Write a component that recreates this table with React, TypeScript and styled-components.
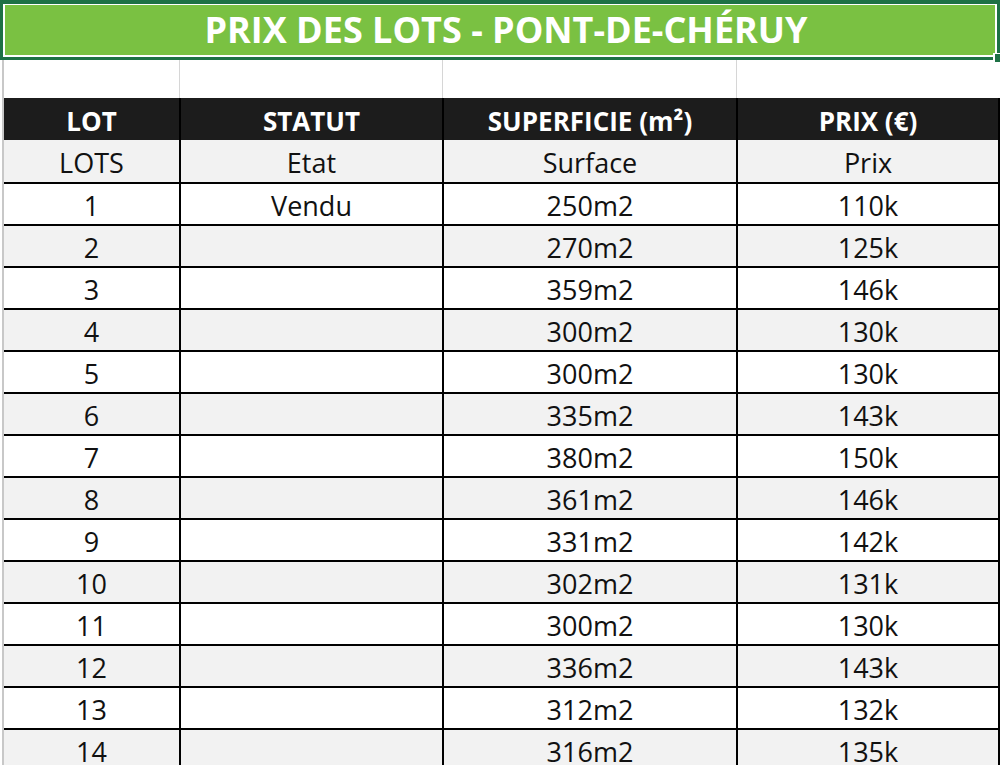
import styled, { createGlobalStyle } from 'styled-components';

interface Lot {
    id: number;
    status?: string;
    surface: number;
    price: number;
}

const lots: Lot[] = [
    { id: 1, status: 'Vendu', surface: 250, price: 110 },
    { id: 2, surface: 270, price: 125 },
    { id: 3, surface: 359, price: 146 },
    { id: 4, surface: 300, price: 130 },
    { id: 5, surface: 300, price: 130 },
    { id: 6, surface: 335, price: 143 },
    { id: 7, surface: 380, price: 150 },
    { id: 8, surface: 361, price: 146 },
    { id: 9, surface: 331, price: 142 },
    { id: 10, surface: 302, price: 131 },
    { id: 11, surface: 300, price: 130 },
    { id: 12, surface: 336, price: 143 },
    { id: 13, surface: 312, price: 132 },
    { id: 14, surface: 316, price: 135 },
];

const GlobalStyle = createGlobalStyle`
  html, body {
    margin: 0;
    padding: 0;
    background: #ffffff;
  }
  body {
    font-family: "Open Sans", "Liberation Sans", sans-serif;
    color: #111;
  }
  * {
    box-sizing: border-box;
  }
`;

const Page = styled.div`
  width: 1000px;
  height: 765px;
  overflow: hidden;
  background: #fff;
`;

const TitleCell = styled.div`
  position: relative;
  width: 1000px;
  height: 60px;
  border: 3px solid #1e7145;
  border-top-width: 4px;
`;

const TitleFill = styled.div`
  height: 100%;
  border: 2px solid #ffffff;
  border-top-width: 1px;
  background: #7ac142;
  display: flex;
  align-items: center;
  justify-content: center;
  padding-left: 12px;
  color: #ffffff;
  font-size: 36px;
  font-weight: 700;
  line-height: 1;
`;

const FillHandle = styled.div`
  position: absolute;
  right: -3px;
  bottom: -5px;
  width: 7px;
  height: 9px;
  background: #1e7145;
  border-left: 2px solid #fff;
  border-top: 1px solid #fff;
`;

const Sheet = styled.div`
  margin-left: 2px;
  border-left: 2px solid #c8c8c8;
`;

const Row = styled.div<{ $height: number; $bg: string; $line?: string }>`
  display: grid;
  grid-template-columns: 177px 263px 294px 1fr;
  height: ${p => p.$height}px;
  background: ${p => p.$bg};
  border-bottom: ${p => (p.$line ? `2px solid ${p.$line}` : 'none')};
`;

const BlankCell = styled.div`
  border-right: 1px solid #d6d6d6;
  margin-right: 1px;
`;

const HeadCell = styled.div`
  display: flex;
  align-items: center;
  justify-content: center;
  border-right: 2px solid #000;
  color: #ffffff;
  font-size: 26px;
  font-weight: 700;
  line-height: 1;
  padding-top: 3px;
`;

const Cell = styled.div`
  display: flex;
  align-items: center;
  justify-content: center;
  border-right: 2px solid #000;
  font-size: 27px;
  line-height: 1;
  padding-top: 2px;
  color: #111;
`;

const App = () => {
    return (
        <Page>
            <GlobalStyle />
            <TitleCell>
                <TitleFill>PRIX DES LOTS - PONT-DE-CHÉRUY</TitleFill>
                <FillHandle />
            </TitleCell>

            <Sheet>
                <Row $height={38} $bg="#ffffff">
                    <BlankCell />
                    <BlankCell />
                    <BlankCell />
                    <div />
                </Row>

                <Row $height={42} $bg="#1c1c1c">
                    <HeadCell>LOT</HeadCell>
                    <HeadCell>STATUT</HeadCell>
                    <HeadCell>SUPERFICIE (m²)</HeadCell>
                    <HeadCell>PRIX (€)</HeadCell>
                </Row>

                <Row $height={44} $bg="#f2f2f2" $line="#000">
                    <Cell>LOTS</Cell>
                    <Cell>Etat</Cell>
                    <Cell>Surface</Cell>
                    <Cell>Prix</Cell>
                </Row>

                {lots.map(lot => (
                    <Row
                        key={lot.id}
                        $height={42}
                        $bg={lot.id % 2 === 0 ? '#f2f2f2' : '#ffffff'}
                        $line="#000"
                    >
                        <Cell>{lot.id}</Cell>
                        <Cell>{lot.status ?? ''}</Cell>
                        <Cell>{lot.surface}m2</Cell>
                        <Cell>{lot.price}k</Cell>
                    </Row>
                ))}
            </Sheet>
        </Page>
    );
};

export default App;
